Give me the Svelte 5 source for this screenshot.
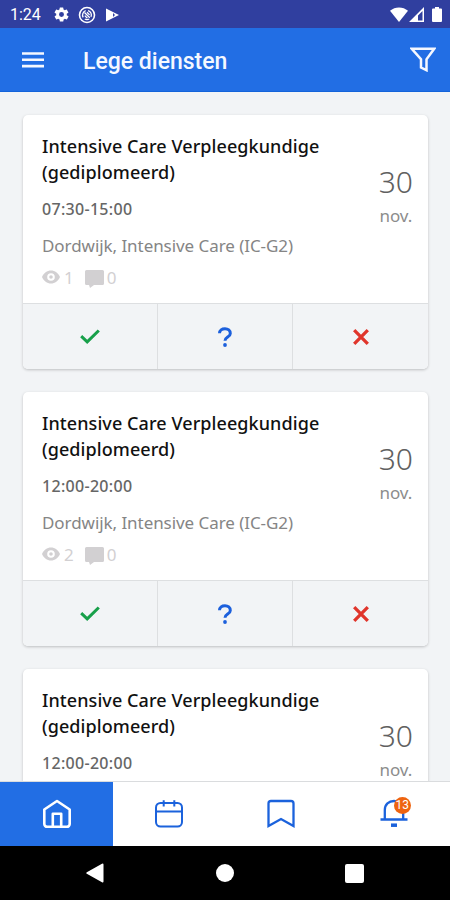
<script>
	let shifts = [
		{ title: 'Intensive Care Verpleegkundige (gediplomeerd)', time: '07:30-15:00', place: 'Dordwijk, Intensive Care (IC-G2)', day: 30, month: 'nov.', views: 1, comments: 0 },
		{ title: 'Intensive Care Verpleegkundige (gediplomeerd)', time: '12:00-20:00', place: 'Dordwijk, Intensive Care (IC-G2)', day: 30, month: 'nov.', views: 2, comments: 0 },
		{ title: 'Intensive Care Verpleegkundige (gediplomeerd)', time: '12:00-20:00', day: 30, month: 'nov.' }
	];

	let notifications = 13;
</script>

<div class="phone">
	<div class="status-bar">
		<span class="clock">1:24</span>
		<svg width="17" height="17" viewBox="0 0 24 24" fill="currentColor">
			<path d="M19.4 13a7.5 7.5 0 0 0 0-2l2.1-1.6a.5.5 0 0 0 .1-.7l-2-3.4a.5.5 0 0 0-.6-.2l-2.5 1a7.3 7.3 0 0 0-1.7-1l-.3-2.7a.5.5 0 0 0-.5-.4h-4a.5.5 0 0 0-.5.4l-.4 2.7a7.3 7.3 0 0 0-1.7 1l-2.5-1a.5.5 0 0 0-.6.2l-2 3.4a.5.5 0 0 0 .1.7L4.6 11a7.5 7.5 0 0 0 0 2l-2.1 1.6a.5.5 0 0 0-.1.7l2 3.4c.1.2.4.3.6.2l2.5-1a7.3 7.3 0 0 0 1.7 1l.4 2.7c0 .2.2.4.5.4h4c.2 0 .4-.2.5-.4l.4-2.7a7.3 7.3 0 0 0 1.7-1l2.5 1c.2.1.5 0 .6-.2l2-3.4a.5.5 0 0 0-.1-.7zM12 15.500a3.500 3.500 0 1 1 0-7 3.500 3.500 0 0 1 0 7z" fill-rule="evenodd" />
		</svg>
		<svg class="sync" width="18" height="18" viewBox="0 0 18 18" fill="none" stroke="currentColor" stroke-width="1.6">
			<circle cx="9" cy="9" r="7.5" />
			<path d="M5.200 11.300a4.500 4.500 0 0 1 2.500-6.600M10 4.600a4.500 4.500 0 0 1 2.900 6.300M6.800 13a4.500 4.500 0 0 0 4.400 0M6.500 6.500l5.300 5.300M6.800 9.600l2.600 2.600M9 6.300l2.600 2.600" stroke-width="1.300" />
		</svg>
		<svg class="play" width="15" height="14" viewBox="0 0 15 14">
			<path d="M1 .5v13L14 7z" fill="currentColor" />
			<path d="M8 5l2 2-2 2z" fill="#303f9f" />
		</svg>
		<div class="signals">
			<svg width="18" height="15" viewBox="0 0 18 15" fill="currentColor">
				<path d="M0 3.800C5-.7 13-.7 18 3.800L9 15z" />
			</svg>
			<svg width="15" height="15" viewBox="0 0 15 15" fill="currentColor">
				<path d="M15 0v15H0zM13.500 4L9 8.500v5h4.500z" fill-rule="evenodd" />
			</svg>
			<svg class="battery" width="10" height="15" viewBox="0 0 10 15" fill="currentColor">
				<path d="M3 0h4v1.500h2a1 1 0 0 1 1 1V14a1 1 0 0 1-1 1H1a1 1 0 0 1-1-1V2.500a1 1 0 0 1 1-1h2z" />
			</svg>
		</div>
	</div>

	<header class="toolbar">
		<svg width="22" height="16" viewBox="0 0 22 16" stroke="currentColor" stroke-width="2.6">
			<path d="M0 1.500h22M0 7.800h22M0 14.100h22" />
		</svg>
		<h1>Lege diensten</h1>
		<svg class="filter" width="26" height="25" viewBox="0 0 26 25" fill="none" stroke="currentColor" stroke-width="2.500">
			<path d="M1.800 1.800h22.400l-7.700 10.500V23.200l-5.500-2.700v-8.200z" />
		</svg>
	</header>

	<main class="list">
		{#each shifts as shift}
			<article class="card">
				<div class="card-body">
					<div class="info">
						<h2>{shift.title}</h2>
						<p class="time">{shift.time}</p>
						{#if shift.place}
							<p class="place">{shift.place}</p>
							<div class="stats">
								<svg width="18" height="14" viewBox="0 0 18 14" fill="currentColor">
									<path d="M9 .5C5 .5 1.800 3 0 7c1.800 4 5 6.500 9 6.500S16.200 11 18 7C16.200 3 13 .5 9 .5zM9 10.800a3.800 3.800 0 1 1 0-7.600 3.800 3.800 0 0 1 0 7.600zM9 5.200a1.800 1.800 0 1 0 0 3.600 1.800 1.800 0 0 0 0-3.600z" fill-rule="evenodd" />
								</svg>
								<span>{shift.views}</span>
								<svg class="bubble" width="19" height="18" viewBox="0 0 19 18" fill="currentColor">
									<path d="M1.500 0h16A1.500 1.500 0 0 1 19 1.500v12a1.500 1.500 0 0 1-1.500 1.500H9l-4 3-1-3H1.500A1.500 1.500 0 0 1 0 13.500v-12A1.500 1.500 0 0 1 1.500 0z" />
								</svg>
								<span>{shift.comments}</span>
							</div>
						{/if}
					</div>
					<div class="date">
						<span class="day">{shift.day}</span>
						<span class="month">{shift.month}</span>
					</div>
				</div>
				<div class="actions">
					<button class="accept" aria-label="Accepteren">
						<svg width="20" height="15" viewBox="0 0 20 15" fill="none" stroke="currentColor" stroke-width="3">
							<path d="M1.200 7.200l6 5.700L18.800 1.500" />
						</svg>
					</button>
					<button class="maybe" aria-label="Misschien">
						<svg width="14" height="20" viewBox="0 0 14 20" fill="none" stroke="currentColor" stroke-width="3">
							<path d="M1.500 6.300C1.500 3.300 4 1.700 7 1.700s5.300 1.900 5.300 4.700c0 3.900-5.300 3.500-5.300 7.400" />
							<circle cx="7" cy="18" r="1.900" fill="currentColor" stroke="none" />
						</svg>
					</button>
					<button class="decline" aria-label="Afwijzen">
						<svg width="16" height="16" viewBox="0 0 16 16" fill="none" stroke="currentColor" stroke-width="3.300">
							<path d="M1.200 1.200l13.600 13.600M14.800 1.200L1.200 14.800" />
						</svg>
					</button>
				</div>
			</article>
		{/each}
	</main>

	<nav class="tabs">
		<a class="active" href="#home" aria-label="Home">
			<svg width="30" height="30" viewBox="0 0 30 30" fill="none" stroke="currentColor" stroke-width="2.600" stroke-linejoin="round">
				<path d="M2.300 10.500L15 2l12.700 8.500V25a2.800 2.800 0 0 1-2.800 2.800H5.100A2.800 2.800 0 0 1 2.300 25z" />
				<path d="M10.800 27.500V14.700h8.400v12.800" />
			</svg>
		</a>
		<a href="#agenda" aria-label="Agenda">
			<svg width="30" height="30" viewBox="0 0 30 30" fill="none" stroke="currentColor" stroke-width="2">
				<rect x="2" y="4" width="26" height="23.500" rx="4.500" />
				<path d="M2 12.600h26M9.700 1.300v6.200M20.300 1.300v6.200" />
			</svg>
		</a>
		<a href="#saved" aria-label="Bewaard">
			<svg width="30" height="30" viewBox="0 0 30 30" fill="none" stroke="currentColor" stroke-width="2.300">
				<path d="M2.500 27V4.500A2.500 2.500 0 0 1 5 2h20a2.500 2.500 0 0 1 2.500 2.500V27L15 20z" />
			</svg>
		</a>
		<a href="#meldingen" aria-label="Meldingen">
			<span class="bell">
				<svg width="30" height="30" viewBox="0 0 30 30" fill="none" stroke="currentColor" stroke-width="2.300">
					<path d="M1.500 20.500h27M5.800 20V11c0-5.500 4-9 9.200-9s9.200 3.500 9.200 9v9" />
					<path d="M12 26.200h6" stroke-width="3.500" />
				</svg>
				<span class="badge">{notifications}</span>
			</span>
		</a>
	</nav>

	<div class="system-bar">
		<svg width="18" height="20" viewBox="0 0 18 20" fill="currentColor">
			<path d="M17.500 1.500v17a1 1 0 0 1-1.500.8L.8 10.800a1 1 0 0 1 0-1.600L16 .7a1 1 0 0 1 1.500.8z" />
		</svg>
		<span class="circle"></span>
		<span class="square"></span>
	</div>
</div>

<style>
	:global(body) {
		background: #f2f4f6;
		overflow: hidden;
	}

	.phone {
		display: flex;
		flex-direction: column;
		height: 900px;
		overflow: hidden;
		font-family: 'Noto Sans', 'Open Sans', sans-serif;
		background: #f2f4f6;
	}

	.status-bar {
		flex: none;
		display: flex;
		align-items: center;
		height: 28px;
		padding: 1px 8px 0 10px;
		box-sizing: border-box;
		color: #fff;
		background: #303f9f;
	}

	.clock {
		width: 43px;
		font: 400 16px Roboto, sans-serif;
	}

	.sync {
		margin-left: 8px;
	}

	.play {
		margin-left: 9px;
	}

	.signals {
		display: flex;
		gap: 1px;
		margin-left: auto;
	}

	.battery {
		margin-left: 7px;
	}

	.toolbar {
		flex: none;
		display: flex;
		align-items: center;
		height: 64px;
		padding: 0 14px 0 22px;
		box-sizing: border-box;
		color: #f5f8ff;
		background: #226ee4;
		border-bottom: 1px solid #1463da;
	}

	h1 {
		margin: 4px 0 0 39px;
		font: 500 23px Roboto, sans-serif;
	}

	.filter {
		margin-left: auto;
	}

	.list {
		flex: 1;
		min-height: 0;
		overflow: hidden;
		display: flex;
		flex-direction: column;
		gap: 23px;
		padding: 23px 22px 0 23px;
	}

	.card {
		flex: none;
		height: 254px;
		display: flex;
		flex-direction: column;
		overflow: hidden;
		border-radius: 5px;
		background: #fff;
		box-shadow: 0 1px 3px rgba(0, 0, 0, 0.22);
	}

	.card-body {
		flex: 1;
		display: flex;
		justify-content: space-between;
		padding: 19px 15px 0 19px;
	}

	.info {
		width: 300px;
	}

	h2 {
		margin: 0;
		font-size: 18px;
		font-weight: 500;
		letter-spacing: 0.08px;
		line-height: 25.5px;
		color: #111;
	}

	p {
		margin: 0;
	}

	.time {
		margin-top: 12px;
		font-size: 16px;
		font-weight: 500;
		letter-spacing: 0.3px;
		line-height: 24px;
		color: #666;
	}

	.place {
		margin-top: 13px;
		font-size: 17px;
		letter-spacing: -0.06px;
		line-height: 24px;
		color: #858585;
	}

	.stats {
		display: flex;
		align-items: center;
		height: 24px;
		margin-top: 7px;
		font-size: 17px;
		color: #d2d0d2;
	}

	.stats span {
		margin-left: 4px;
	}

	.stats .bubble {
		margin: 3px 0 0 11px;
	}

	.stats .bubble + span {
		margin-left: 3px;
	}

	.date {
		display: flex;
		flex-direction: column;
		align-items: center;
		padding-top: 28px;
	}

	.day {
		font-size: 30px;
		font-weight: 300;
		line-height: 40px;
		color: #606060;
	}

	.month {
		font-size: 17px;
		line-height: 27px;
		color: #8c8c8c;
	}

	.actions {
		flex: none;
		display: grid;
		grid-template-columns: 134px 135px 1fr;
		height: 65px;
		border-top: 1px solid #dddfe1;
		background: #f2f4f6;
	}

	.actions button {
		display: flex;
		align-items: center;
		justify-content: center;
		padding: 0;
		border: 0;
		background: none;
	}

	.actions button + button {
		border-left: 1px solid #dddfe1;
	}

	.accept {
		color: #18a04a;
	}

	.maybe {
		color: #1c60dc;
	}

	.decline {
		color: #e0352b;
	}

	.tabs {
		flex: none;
		display: grid;
		grid-template-columns: 113px 112px 1fr 1fr;
		height: 65px;
		box-sizing: border-box;
		border-top: 1px solid #dadcde;
		background: #fff;
	}

	.tabs a {
		display: flex;
		align-items: center;
		justify-content: center;
		color: #1b62dc;
	}

	.tabs a.active {
		color: #fff;
		background: #226ee4;
	}

	.bell {
		position: relative;
		height: 30px;
	}

	.badge {
		position: absolute;
		top: -2px;
		right: -2px;
		width: 17px;
		height: 17px;
		border-radius: 50%;
		font: 400 12px/17px Roboto, sans-serif;
		text-align: center;
		color: #fff;
		background: #ee6410;
	}

	.system-bar {
		flex: none;
		display: flex;
		align-items: center;
		justify-content: space-between;
		height: 54px;
		padding: 0 86px;
		box-sizing: border-box;
		color: #fff;
		background: #000;
	}

	.circle {
		width: 18px;
		height: 18px;
		border-radius: 50%;
		background: #fff;
	}

	.square {
		width: 19px;
		height: 19px;
		border-radius: 2px;
		background: #fff;
	}
</style>
